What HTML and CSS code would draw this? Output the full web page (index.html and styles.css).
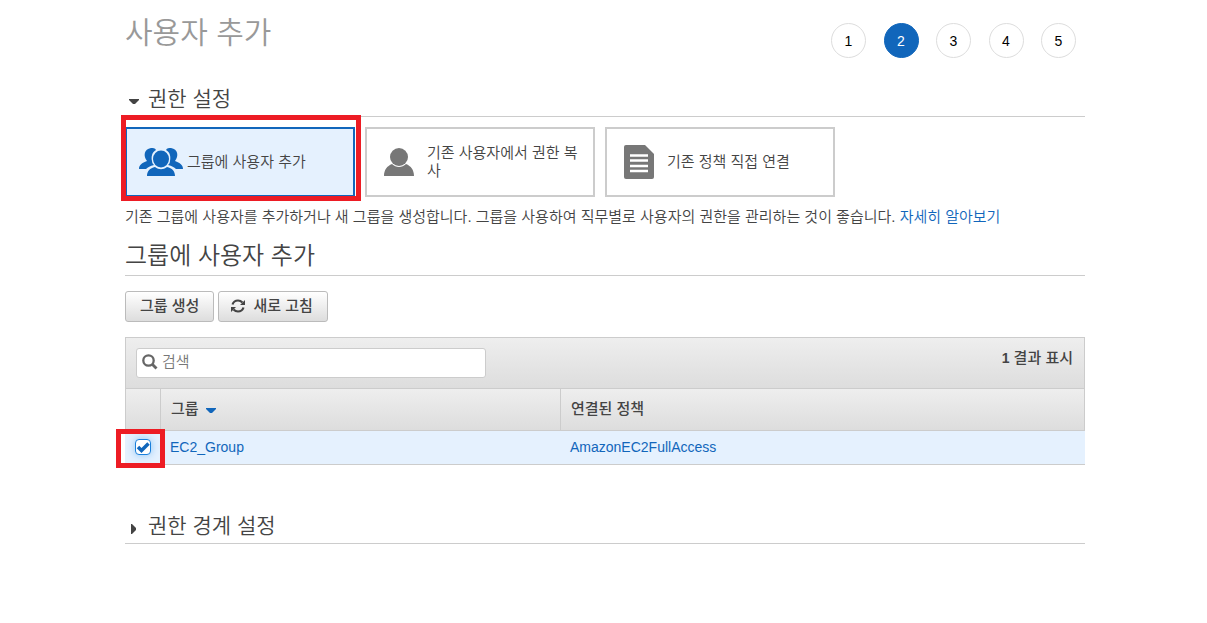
FILE: index.html
```
<!DOCTYPE html>
<html lang="ko">
<head>
    <meta charset="UTF-8">
    <meta name="viewport" content="width=device-width, initial-scale=1.0">
    <title>사용자 추가</title>
    <link rel="stylesheet" href="styles.css">
</head>
<body>
    <header class="page-header">
        <h1>사용자 추가</h1>
        <ol class="steps">
            <li>1</li>
            <li class="active" aria-current="step">2</li>
            <li>3</li>
            <li>4</li>
            <li>5</li>
        </ol>
    </header>

    <main>
        <h2 class="section-title">
            <button type="button" class="toggle" aria-expanded="true">
                <svg width="10" height="10" viewBox="0 0 10 10"><path d="M0 2h10v1L6 7H4L0 3z" fill="#444"/></svg>
                권한 설정
            </button>
        </h2>

        <div class="options">
            <button type="button" class="option selected">
                <svg width="44" height="30" viewBox="0 0 44 30" fill="#1166bb">
                    <path d="M12 1c2 0 4 0 5 2-4 2-5 7-4 11 0 2 1 3 2 4-4 1-6 2-8 4H0c0-4 3-6 8-8C4 9 5 2 12 1z"/>
                    <path d="M32 1c-2 0-4 0-5 2 4 2 5 7 4 11 0 2-1 3-2 4 4 1 6 2 8 4h7c0-4-3-6-8-8 4-5 3-12-4-13z"/>
                    <ellipse cx="22" cy="12" rx="8" ry="8.500"/>
                    <path d="M8 29c0-5 3-8 8-9 4 3 8 3 12 0 5 1 8 4 8 9z"/>
                </svg>
                <span>그룹에 사용자 추가</span>
            </button>
            <button type="button" class="option">
                <svg width="30" height="28" viewBox="0 0 30 28" fill="#777">
                    <circle cx="15" cy="9" r="9"/>
                    <path d="M0 28c0-6 3-10 8-12 4 4 10 4 14 0 5 2 8 6 8 12z"/>
                </svg>
                <span>기존 사용자에서 권한 복사</span>
            </button>
            <button type="button" class="option">
                <svg width="30" height="34" viewBox="0 0 30 34">
                    <path d="M2 0h19l9 9v23a2 2 0 0 1-2 2H2a2 2 0 0 1-2-2V2a2 2 0 0 1 2-2z" fill="#777"/>
                    <path d="M6 10.500h18M6 15.500h18M6 21h18M6 26h18" stroke="#fff" stroke-width="2.600"/>
                </svg>
                <span>기존 정책 직접 연결</span>
            </button>
        </div>

        <p class="description">기존 그룹에 사용자를 추가하거나 새 그룹을 생성합니다. 그룹을 사용하여 직무별로 사용자의 권한을 관리하는 것이 좋습니다. <a href="#">자세히 알아보기</a></p>

        <h2 class="sub-title">그룹에 사용자 추가</h2>

        <div class="actions">
            <button type="button" class="btn">그룹 생성</button>
            <button type="button" class="btn">
                <svg width="14" height="14" viewBox="0 0 14 14" fill="none" stroke="#444" stroke-width="2.200">
                    <path d="M1.500 5.500C2.500 2.500 4.500 1.500 7 1.500c2 0 3.500 1 4.500 2M12.500 8.500c-1 3-3 4-5.500 4-2 0-3.500-1-4.500-2"/>
                    <path d="M14 1v5H9zM0 13V8h5z" fill="#444" stroke="none"/>
                </svg>
                새로 고침
            </button>
        </div>

        <div class="toolbar">
            <div class="search">
                <svg width="16" height="16" viewBox="0 0 16 16" fill="none" stroke="#666">
                    <circle cx="6.500" cy="6.500" r="5.200" stroke-width="2.300"/>
                    <path d="M10.500 10.500l4 4" stroke-width="2.800"/>
                </svg>
                <input type="text" placeholder="검색" aria-label="검색">
            </div>
            <span class="count"><b>1</b> 결과 표시</span>
        </div>
        <table class="groups">
            <thead>
                <tr>
                    <th class="col-check"></th>
                    <th class="col-group">그룹 <svg width="10" height="6" viewBox="0 0 10 6"><path d="M0 0h10v1L6 5H4L0 1z" fill="#1166bb"/></svg></th>
                    <th>연결된 정책</th>
                </tr>
            </thead>
            <tbody>
                <tr>
                    <td class="check-cell"><input type="checkbox" aria-label="EC2_Group" checked></td>
                    <td><a href="#">EC2_Group</a></td>
                    <td><a href="#">AmazonEC2FullAccess</a></td>
                </tr>
            </tbody>
        </table>

        <h2 class="section-title boundary">
            <button type="button" class="toggle" aria-expanded="false">
                <svg width="10" height="10" viewBox="0 0 10 10"><path d="M2 0h1l4 4v2l-4 4H2z" fill="#444"/></svg>
                권한 경계 설정
            </button>
        </h2>
    </main>
</body>
</html>
```
FILE: styles.css
```
* {
    box-sizing: border-box;
}
body {
    margin: 0;
    padding: 0 122px 40px 125px;
    background: #fff;
    color: #444;
    font-family: "Liberation Sans", "Noto Sans CJK KR", sans-serif;
    font-size: 15px;
    font-weight: 350;
    line-height: 18px;
}
button, input {
    font: inherit;
    color: inherit;
}
a {
    color: #1166bb;
    text-decoration: none;
}
h1, h2 {
    margin: 0;
    font-weight: 350;
}

/* header */
.page-header {
    display: flex;
    justify-content: space-between;
    height: 82px;
    padding: 14px 9px 0 0;
}
.page-header h1 {
    color: #999;
    font-size: 30px;
    line-height: 38px;
}
.steps {
    display: flex;
    justify-content: space-between;
    width: 245px;
    margin: 9px 0 0;
    padding: 0;
    list-style: none;
}
.steps li {
    width: 35px;
    height: 35px;
    border: 1px solid #ddd;
    border-radius: 50%;
    color: #000;
    font-size: 14px;
    line-height: 34px;
    text-align: center;
}
.steps .active {
    border-color: #1166bb;
    background: #1166bb;
    color: #fff;
}

/* section headings */
.section-title {
    border-bottom: 1px solid #ccc;
    font-size: 21px;
    line-height: 34px;
}
.toggle {
    display: flex;
    align-items: center;
    gap: 9px;
    padding: 0 0 0 4px;
    border: none;
    background: none;
    cursor: pointer;
}
.toggle svg {
    margin-top: 6px;
}
.boundary {
    margin-top: 44px;
}
.sub-title {
    margin-top: 10px;
    border-bottom: 1px solid #ccc;
    font-size: 24px;
    line-height: 38px;
}

/* permission options */
.options {
    display: flex;
    gap: 10px;
    margin-top: 10px;
}
.option {
    display: flex;
    align-items: center;
    gap: 13px;
    width: 230px;
    height: 70px;
    padding: 0 12px 0 17px;
    border: 2px solid #ccc;
    background: #fff;
    text-align: left;
    word-break: break-all;
    cursor: pointer;
}
.option svg {
    flex: none;
}
.option.selected {
    position: relative;
    gap: 4px;
    padding-left: 12px;
    border-color: #1166bb;
    background: #e5f1fe;
}
.option.selected::after {
    content: "";
    position: absolute;
    inset: -14px -8px -6px -6px;
    border: 5px solid #ed1c24;
}
.description {
    margin: 8px 0 0;
    padding-top: 1px;
    line-height: 21px;
}

/* buttons */
.actions {
    display: flex;
    gap: 4px;
    margin: 15px 0;
}
.btn {
    display: flex;
    align-items: center;
    gap: 7px;
    height: 31px;
    padding: 0 14px 2px;
    border: 1px solid #bbb;
    border-radius: 3px;
    background: linear-gradient(#fff, #ddd);
    font-weight: 500;
    cursor: pointer;
}
.btn svg {
    margin: 0 1px 0 -2px;
}

/* group table */
.toolbar {
    display: flex;
    justify-content: space-between;
    height: 51px;
    padding: 10px 11px 0 10px;
    border: 1px solid #ccc;
    border-bottom: none;
    background: linear-gradient(#eee, #ddd);
}
.search {
    display: flex;
    align-items: center;
    gap: 4px;
    width: 350px;
    height: 30px;
    padding: 0 5px 2px;
    border: 1px solid #ccc;
    border-radius: 3px;
    background: #fff;
}
.search input {
    flex: 1;
    padding: 0;
    border: none;
    outline: none;
    background: none;
}
.search input::placeholder {
    color: #777;
}
.count {
    line-height: 20px;
    font-weight: 500;
}
.count b {
    font-size: 14px;
}
.groups {
    width: 100%;
    table-layout: fixed;
    border-spacing: 0;
}
.groups th {
    height: 43px;
    padding: 0 10px 2px;
    border: solid #ccc;
    border-width: 1px 0 1px 1px;
    background: linear-gradient(#eee, #ddd);
    font-weight: 500;
    text-align: left;
}
.groups th:last-child {
    border-right-width: 1px;
}
.groups th svg {
    margin-left: 3px;
}
.groups .col-check {
    width: 35px;
}
.groups .col-group {
    width: 400px;
}
.groups td {
    height: 34px;
    padding: 0 10px 2px;
    border-bottom: 1px solid #ccc;
    background: #e5f1fe;
    font-size: 14px;
}
.groups .check-cell {
    position: relative;
    padding-right: 0;
}
.check-cell::after {
    content: "";
    position: absolute;
    inset: -2px -5px -4px -9px;
    border: 5px solid #ed1c24;
    pointer-events: none;
}
.check-cell input {
    appearance: none;
    display: block;
    width: 16px;
    height: 16px;
    margin: 0;
    border: 1px solid #1a7fdb;
    border-radius: 4px;
    box-shadow: 0 0 8px #8cc4f5;
    background: #fff url("data:image/svg+xml,%3Csvg xmlns='http://www.w3.org/2000/svg' viewBox='0 0 14 14'%3E%3Cpath d='M2 7l3.500 3.500 7-7' fill='none' stroke='%231166bb' stroke-width='3.500'/%3E%3C/svg%3E") center / 14px no-repeat;
}
```
